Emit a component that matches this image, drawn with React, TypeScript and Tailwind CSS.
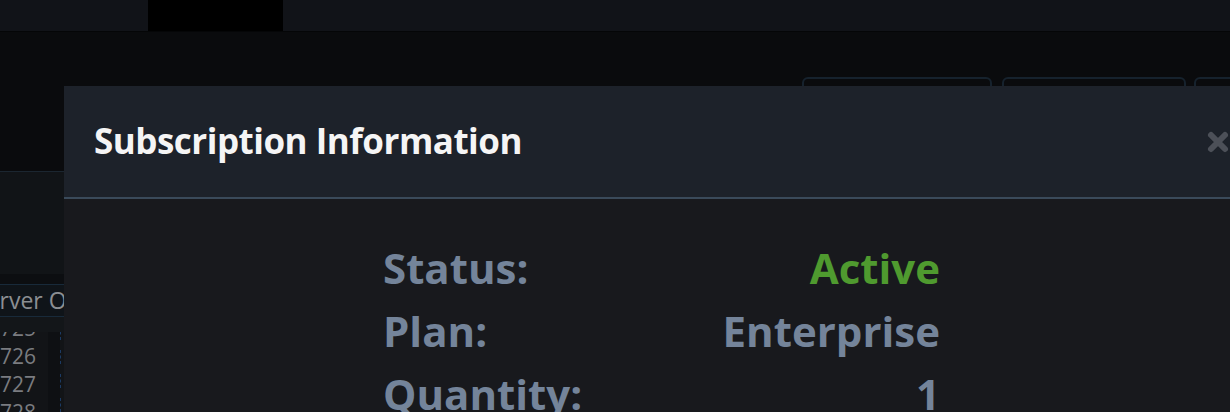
import React from 'react';

const rows = [
  { label: 'Status:', value: 'Active', tone: 'text-[#4f9a2f]' },
  { label: 'Plan:', value: 'Enterprise', tone: 'text-[#74849a]' },
  { label: 'Quantity:', value: '1', tone: 'text-[#74849a]' },
];

const font = { fontFamily: '"Open Sans", "Noto Sans", sans-serif' };

function CloseIcon() {
  return (
    <svg width="24" height="24" viewBox="0 0 24 24" className="shrink-0">
      <path d="M5 5 L19 19 M19 5 L5 19" stroke="#4c5058" strokeWidth="6" strokeLinecap="round" />
    </svg>
  );
}

function Backdrop() {
  return (
    <div className="flex h-full flex-col">
      {/* top bar */}
      <div className="flex h-8 shrink-0 border-b border-[#050607] bg-[#111318]">
        <div className="w-[148px]" />
        <div className="w-[135px] bg-black" />
      </div>

      {/* toolbar strip with buttons on the right */}
      <div className="flex h-[139px] shrink-0 items-start bg-[#0a0b0d] pl-[802px] pt-[45px]">
        <div className="h-10 w-[190px] shrink-0 rounded-md border-2 border-[#16222d]" />
        <div className="ml-[10px] h-10 w-[184px] shrink-0 rounded-md border-2 border-[#16222d]" />
        <div className="ml-2 h-10 w-[60px] shrink-0 rounded-md border-2 border-[#16222d]" />
      </div>

      <div className="h-[103px] shrink-0 border-t border-[#1b2630] bg-[#111417]" />
      <div className="h-[10px] shrink-0 bg-[#0c0e11]" />

      {/* panel tab */}
      <div className="flex h-[33px] shrink-0 items-center overflow-hidden border-y border-[#182a3a] bg-[#0f1419]">
        <span className="-ml-[26px] whitespace-nowrap text-[23px] text-[#8b8e92]" style={font}>
          Server Output
        </span>
      </div>
      <div className="h-[15px] shrink-0 bg-[#131619]" />

      {/* editor lines */}
      <div className="flex flex-1 overflow-hidden bg-[#121417]">
        <div className="-mt-[18px] w-[48px] shrink-0 pr-[12px] text-right text-[21px] leading-[28px] text-[#7a7c80]" style={font}>
          <div>725</div>
          <div>726</div>
          <div>727</div>
          <div>728</div>
        </div>
        <div className="w-[12px] shrink-0 bg-[#0e1013]" />
        <div className="-mt-[6px] flex flex-col gap-[10px]">
          {[0, 1, 2, 3].map(i => (
            <div key={i} className="h-[18px] w-[6px] border-l border-dashed border-[#1c3a63]" />
          ))}
        </div>
      </div>
    </div>
  );
}

export default function App() {
  return (
    <div className="relative h-[412px] w-[1230px] overflow-hidden bg-[#0a0b0d]">
      <Backdrop />

      {/* modal */}
      <div className="absolute left-[64px] top-[86px] w-[1195px]" style={font}>
        <div className="flex h-[113px] items-center justify-between border-b-2 border-[#3a4a5a] bg-[#1d222a] pl-[30px] pr-[29px]">
          <h2 className="text-[35px] font-bold tracking-[-0.5px] text-[#f5f5f5]">Subscription Information</h2>
          <CloseIcon />
        </div>
        <div className="h-[300px] bg-[#18191d] pt-[37px]">
          <div className="mx-auto w-[557px]">
            {rows.map(r => (
              <div key={r.label} className="flex justify-between text-[42px] font-bold leading-[63px]">
                <span className="text-[#74849a]">{r.label}</span>
                <span className={r.tone}>{r.value}</span>
              </div>
            ))}
          </div>
        </div>
      </div>
    </div>
  );
}
